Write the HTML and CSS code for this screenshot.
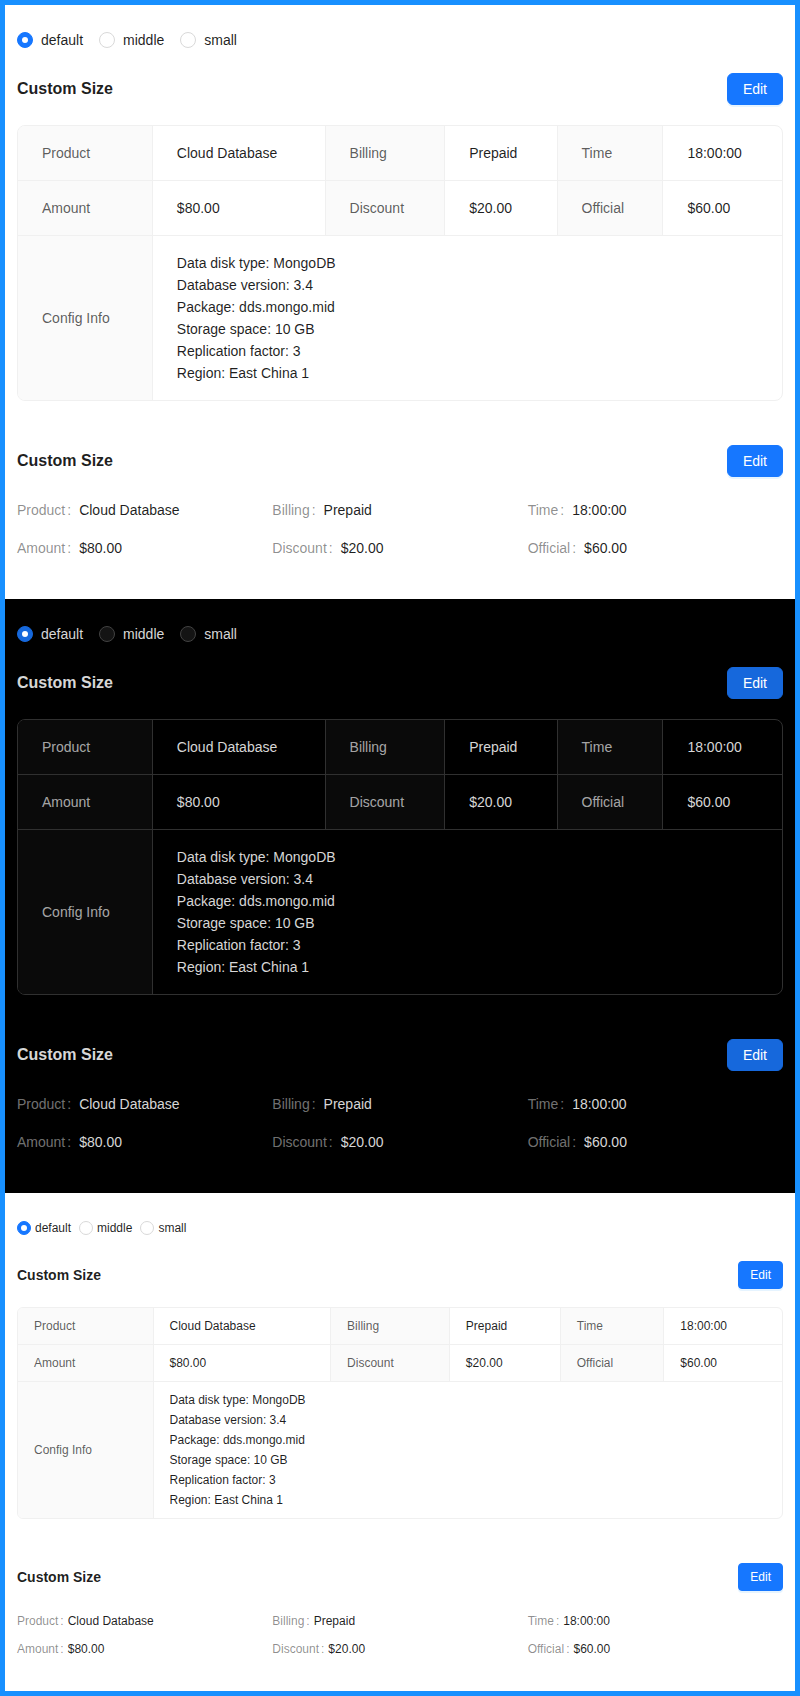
FILE: index.html
```html
<!DOCTYPE html>
<html lang="en">
<head>
<meta charset="utf-8">
<title>Descriptions – Custom Size</title>
<link rel="stylesheet" href="styles.css">
</head>
<body>
<div class="frame">

  <section class="panel light">
    <div class="radios">
      <label class="radio checked"><span class="dot"></span><span class="rlabel">default</span></label>
      <label class="radio"><span class="dot"></span><span class="rlabel">middle</span></label>
      <label class="radio"><span class="dot"></span><span class="rlabel">small</span></label>
    </div>
    <div class="desc-header">
      <div class="desc-title">Custom Size</div>
      <button class="btn-primary">Edit</button>
    </div>
    <div class="view">
      <table class="bordered">
        <tr>
          <th>Product</th><td>Cloud Database</td>
          <th>Billing</th><td>Prepaid</td>
          <th>Time</th><td>18:00:00</td>
        </tr>
        <tr>
          <th>Amount</th><td>$80.00</td>
          <th>Discount</th><td>$20.00</td>
          <th>Official</th><td>$60.00</td>
        </tr>
        <tr>
          <th>Config Info</th>
          <td colspan="5">Data disk type: MongoDB<br>Database version: 3.4<br>Package: dds.mongo.mid<br>Storage space: 10 GB<br>Replication factor: 3<br>Region: East China 1</td>
        </tr>
      </table>
    </div>
    <div class="desc-header second">
      <div class="desc-title">Custom Size</div>
      <button class="btn-primary">Edit</button>
    </div>
    <table class="plain">
      <tr>
        <td><div class="item"><span class="ilabel">Product</span><span class="ival">Cloud Database</span></div></td>
        <td><div class="item"><span class="ilabel">Billing</span><span class="ival">Prepaid</span></div></td>
        <td><div class="item"><span class="ilabel">Time</span><span class="ival">18:00:00</span></div></td>
      </tr>
      <tr>
        <td><div class="item"><span class="ilabel">Amount</span><span class="ival">$80.00</span></div></td>
        <td><div class="item"><span class="ilabel">Discount</span><span class="ival">$20.00</span></div></td>
        <td><div class="item"><span class="ilabel">Official</span><span class="ival">$60.00</span></div></td>
      </tr>
    </table>
  </section>

  <section class="panel dark">
    <div class="radios">
      <label class="radio checked"><span class="dot"></span><span class="rlabel">default</span></label>
      <label class="radio"><span class="dot"></span><span class="rlabel">middle</span></label>
      <label class="radio"><span class="dot"></span><span class="rlabel">small</span></label>
    </div>
    <div class="desc-header">
      <div class="desc-title">Custom Size</div>
      <button class="btn-primary">Edit</button>
    </div>
    <div class="view">
      <table class="bordered">
        <tr>
          <th>Product</th><td>Cloud Database</td>
          <th>Billing</th><td>Prepaid</td>
          <th>Time</th><td>18:00:00</td>
        </tr>
        <tr>
          <th>Amount</th><td>$80.00</td>
          <th>Discount</th><td>$20.00</td>
          <th>Official</th><td>$60.00</td>
        </tr>
        <tr>
          <th>Config Info</th>
          <td colspan="5">Data disk type: MongoDB<br>Database version: 3.4<br>Package: dds.mongo.mid<br>Storage space: 10 GB<br>Replication factor: 3<br>Region: East China 1</td>
        </tr>
      </table>
    </div>
    <div class="desc-header second">
      <div class="desc-title">Custom Size</div>
      <button class="btn-primary">Edit</button>
    </div>
    <table class="plain">
      <tr>
        <td><div class="item"><span class="ilabel">Product</span><span class="ival">Cloud Database</span></div></td>
        <td><div class="item"><span class="ilabel">Billing</span><span class="ival">Prepaid</span></div></td>
        <td><div class="item"><span class="ilabel">Time</span><span class="ival">18:00:00</span></div></td>
      </tr>
      <tr>
        <td><div class="item"><span class="ilabel">Amount</span><span class="ival">$80.00</span></div></td>
        <td><div class="item"><span class="ilabel">Discount</span><span class="ival">$20.00</span></div></td>
        <td><div class="item"><span class="ilabel">Official</span><span class="ival">$60.00</span></div></td>
      </tr>
    </table>
  </section>

  <section class="panel light compact">
    <div class="radios">
      <label class="radio checked"><span class="dot"></span><span class="rlabel">default</span></label>
      <label class="radio"><span class="dot"></span><span class="rlabel">middle</span></label>
      <label class="radio"><span class="dot"></span><span class="rlabel">small</span></label>
    </div>
    <div class="desc-header">
      <div class="desc-title">Custom Size</div>
      <button class="btn-primary">Edit</button>
    </div>
    <div class="view">
      <table class="bordered">
        <tr>
          <th>Product</th><td>Cloud Database</td>
          <th>Billing</th><td>Prepaid</td>
          <th>Time</th><td>18:00:00</td>
        </tr>
        <tr>
          <th>Amount</th><td>$80.00</td>
          <th>Discount</th><td>$20.00</td>
          <th>Official</th><td>$60.00</td>
        </tr>
        <tr>
          <th>Config Info</th>
          <td colspan="5">Data disk type: MongoDB<br>Database version: 3.4<br>Package: dds.mongo.mid<br>Storage space: 10 GB<br>Replication factor: 3<br>Region: East China 1</td>
        </tr>
      </table>
    </div>
    <div class="desc-header second">
      <div class="desc-title">Custom Size</div>
      <button class="btn-primary">Edit</button>
    </div>
    <table class="plain">
      <tr>
        <td><div class="item"><span class="ilabel">Product</span><span class="ival">Cloud Database</span></div></td>
        <td><div class="item"><span class="ilabel">Billing</span><span class="ival">Prepaid</span></div></td>
        <td><div class="item"><span class="ilabel">Time</span><span class="ival">18:00:00</span></div></td>
      </tr>
      <tr>
        <td><div class="item"><span class="ilabel">Amount</span><span class="ival">$80.00</span></div></td>
        <td><div class="item"><span class="ilabel">Discount</span><span class="ival">$20.00</span></div></td>
        <td><div class="item"><span class="ilabel">Official</span><span class="ival">$60.00</span></div></td>
      </tr>
    </table>
  </section>

</div>
</body>
</html>
```

FILE: styles.css
```css
* { box-sizing: border-box; }

html, body {
  margin: 0;
  padding: 0;
  background: #ffffff;
}

body {
  font-family: "Liberation Sans", Arial, sans-serif;
  font-size: 14px;
  line-height: 22px;
}

.frame {
  border: 5px solid #1890ff;
  min-height: 1696px;
}

.panel {
  padding: 24px 12px 24px;
  --text: rgba(0, 0, 0, 0.88);
  --label: rgba(0, 0, 0, 0.45);
  --blabel: rgba(0, 0, 0, 0.65);
  --split: #f0f0f0;
  --label-bg: #fafafa;
  --primary: #1677ff;
  --radio-bg: #ffffff;
  --radio-border: #d9d9d9;
  --fs: 14px;
  --lh: 22px;
  --title-fs: 16px;
  --title-lh: 24px;
  --cell-pad: 16px 24px;
  --row-pad: 16px;
  --colon-gap: 8px;
  --title-mb: 20px;
  --btn-h: 32px;
  --btn-pad: 15px;
  --btn-radius: 6px;
  --radius: 8px;
  --radio-size: 16px;
  --radio-dot: 6px;
  --radio-gap: 8px;
  color: var(--text);
}

.panel.light { background: #ffffff; }

.panel.dark {
  background: #000000;
  --text: rgba(255, 255, 255, 0.85);
  --label: rgba(255, 255, 255, 0.45);
  --blabel: rgba(255, 255, 255, 0.65);
  --split: #303030;
  --label-bg: #0a0a0a;
  --primary: #1668dc;
  --radio-bg: #141414;
  --radio-border: #424242;
}

.panel.compact {
  --fs: 12px;
  --lh: 20px;
  --title-fs: 14px;
  --title-lh: 22px;
  --cell-pad: 8px 16px;
  --row-pad: 8px;
  --colon-gap: 4px;
  --title-mb: 18px;
  --btn-h: 28px;
  --btn-pad: 11px;
  --btn-radius: 4px;
  --radius: 6px;
  --radio-size: 14px;
  --radio-dot: 6px;
  --radio-gap: 4px;
}

/* Radio group */
.radios {
  display: flex;
  align-items: center;
  height: 22px;
  margin-bottom: 22px;
  font-size: var(--fs);
  line-height: var(--lh);
}

.radio {
  display: inline-flex;
  align-items: center;
  margin-right: var(--radio-gap);
  color: var(--text);
  cursor: pointer;
}

.radio .dot {
  width: var(--radio-size);
  height: var(--radio-size);
  border-radius: 50%;
  border: 1px solid var(--radio-border);
  background: var(--radio-bg);
  display: inline-flex;
  align-items: center;
  justify-content: center;
  flex: none;
}

.radio.checked .dot {
  background: var(--primary);
  border-color: var(--primary);
}

.radio.checked .dot::after {
  content: "";
  width: var(--radio-dot);
  height: var(--radio-dot);
  border-radius: 50%;
  background: #ffffff;
}

.rlabel {
  padding: 0 var(--radio-gap);
}

/* Header */
.desc-header {
  display: flex;
  align-items: center;
  margin-bottom: var(--title-mb);
}

.desc-header.second {
  margin-top: 44px;
  margin-bottom: calc(var(--title-mb) + 2px);
}

.desc-title {
  flex: auto;
  font-size: var(--title-fs);
  line-height: var(--title-lh);
  font-weight: bold;
  color: var(--text);
}

.btn-primary {
  font-family: inherit;
  height: var(--btn-h);
  padding: 0 var(--btn-pad);
  font-size: var(--fs);
  line-height: var(--lh);
  color: #ffffff;
  background: var(--primary);
  border: 1px solid var(--primary);
  border-radius: var(--btn-radius);
  box-shadow: 0 2px 0 rgba(5, 145, 255, 0.1);
  cursor: pointer;
}

.dark .btn-primary {
  box-shadow: none;
}

/* Bordered descriptions */
.view {
  border: 1px solid var(--split);
  border-radius: var(--radius);
  overflow: hidden;
}

.bordered {
  width: 100%;
  border-collapse: collapse;
  table-layout: auto;
  font-size: var(--fs);
  line-height: var(--lh);
}

.bordered tr {
  border-bottom: 1px solid var(--split);
}

.bordered tr:last-child {
  border-bottom: none;
}

.bordered th,
.bordered td {
  padding: var(--cell-pad);
  border-right: 1px solid var(--split);
  text-align: left;
  vertical-align: middle;
}

.bordered th:last-child,
.bordered td:last-child {
  border-right: none;
}

.bordered th {
  font-weight: normal;
  color: var(--blabel);
  background: var(--label-bg);
}

.bordered td {
  color: var(--text);
}

/* Plain descriptions */
.plain {
  width: 100%;
  border-collapse: collapse;
  table-layout: fixed;
  font-size: var(--fs);
  line-height: var(--lh);
}

.plain td {
  padding: 0 0 var(--row-pad) 0;
  vertical-align: top;
}

.item {
  display: flex;
  align-items: baseline;
}

.ilabel {
  color: var(--label);
  display: inline-flex;
  align-items: baseline;
}

.ilabel::after {
  content: ":";
  position: relative;
  top: -0.5px;
  margin: 0 var(--colon-gap) 0 2px;
}

.ival {
  color: var(--text);
}
```
